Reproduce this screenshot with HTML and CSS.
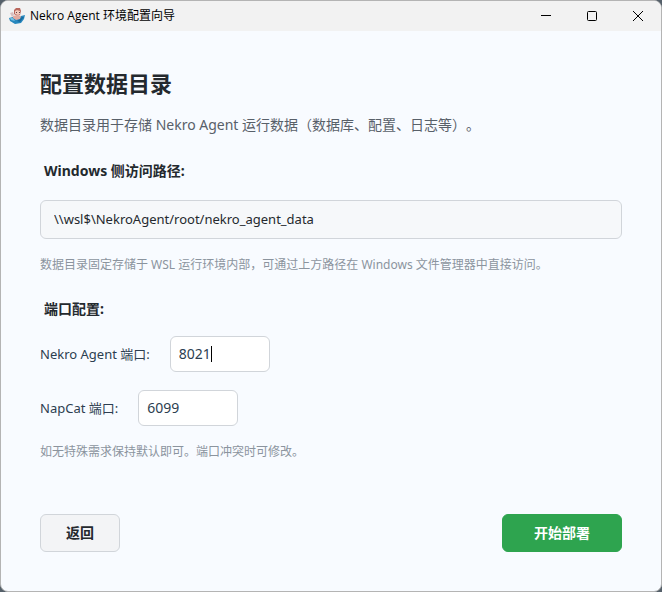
FILE: index.html
```html
<!DOCTYPE html>
<html lang="zh-CN">
<head>
    <meta charset="UTF-8">
    <meta name="viewport" content="width=device-width, initial-scale=1.0">
    <title>Nekro Agent 环境配置向导</title>
    <link rel="stylesheet" href="styles.css">
</head>
<body>

    <div class="window">
        <header class="titlebar">
            <svg class="app-icon" viewBox="0 0 16 16" aria-hidden="true">
                <path d="M0 10l4-1 3 2 5-3 4-1-1 4-3 4-6 1-5-3z" fill="#2787bd"/>
                <path d="M1 10l3 0 2 3-4-1z" fill="#77c1e2"/>
                <path d="M8 13l5-4 2 0-4 5z" fill="#176a9f"/>
                <path d="M5 2l2-2h4l1 3-1 4-3 1-3-2z" fill="#b9675c"/>
                <path d="M6 3l2-1 3 1v3L9 7 6 6z" fill="#f3cabb"/>
                <path d="M4 8l4-1 4 1-1 3-4 1-3-2z" fill="#e2aba0"/>
                <path d="M1 5l3-1 1 3-2 2z" fill="#d8bfc0"/>
                <path d="M7 4h1v1H7zM10 4h1v1h-1z" fill="#60404a"/>
            </svg>
            <span class="titlebar-text">Nekro Agent 环境配置向导</span>
            <button class="window-button" type="button" aria-label="最小化">
                <svg viewBox="0 0 12 12"><path d="M1 5.5h10"/></svg>
            </button>
            <button class="window-button" type="button" aria-label="最大化">
                <svg viewBox="0 0 12 12"><rect x="1.5" y="1.5" width="9" height="9" rx="1"/></svg>
            </button>
            <button class="window-button" type="button" aria-label="关闭">
                <svg viewBox="0 0 12 12"><path d="M1 1l10 10M11 1L1 11"/></svg>
            </button>
        </header>

        <form class="content">
            <h1>配置数据目录</h1>
            <p class="description">数据目录用于存储 Nekro Agent 运行数据（数据库、配置、日志等）。</p>

            <label class="section-label" for="dataPath">Windows 侧访问路径:</label>
            <input class="path-input" type="text" id="dataPath" value="\\wsl$\NekroAgent/root/nekro_agent_data" readonly>
            <p class="hint">数据目录固定存储于 WSL 运行环境内部，可通过上方路径在 Windows 文件管理器中直接访问。</p>

            <h2 class="section-label">端口配置:</h2>
            <div class="port-row">
                <label for="agentPort">Nekro Agent 端口:</label>
                <div class="port-field">
                    <input class="port-input" type="text" id="agentPort" value="8021">
                    <span class="caret"></span>
                </div>
            </div>
            <div class="port-row">
                <label for="napcatPort">NapCat 端口:</label>
                <input class="port-input" type="text" id="napcatPort" value="6099">
            </div>
            <p class="hint">如无特殊需求保持默认即可。端口冲突时可修改。</p>

            <div class="actions">
                <button class="button" type="button">返回</button>
                <button class="button button-primary" type="submit">开始部署</button>
            </div>
        </form>
    </div>

</body>
</html>
```
FILE: styles.css
```css
* {
    box-sizing: border-box;
}
body {
    margin: 0;
    background-color: #55606a;
    font-family: "Noto Sans", "Noto Sans CJK SC", sans-serif;
    font-size: 14px;
    line-height: 20px;
    color: #24292e;
    text-spacing-trim: space-all;
}
input, button {
    font: inherit;
    color: inherit;
}
h1, h2, p {
    margin: 0;
}
.window {
    display: flex;
    flex-direction: column;
    min-height: 100vh;
    border: 1px solid #b4b4b4;
    border-radius: 8px;
    background-color: #f8fbff;
    overflow: hidden;
}
.titlebar {
    display: flex;
    align-items: center;
    height: 30px;
    padding-left: 8px;
    background-color: #f2f2f2;
    font-family: "Open Sans", "Noto Sans CJK SC", sans-serif;
    font-size: 12px;
    color: #000;
}
.app-icon {
    width: 16px;
    height: 16px;
    margin-right: 5px;
}
.titlebar-text {
    flex: 1;
}
.window-button {
    display: flex;
    align-items: center;
    justify-content: center;
    width: 46px;
    height: 30px;
    padding: 0;
    border: none;
    background: none;
}
.window-button svg {
    width: 12px;
    height: 12px;
    fill: none;
    stroke: #000;
}
.content {
    display: flex;
    flex: 1;
    flex-direction: column;
    padding: 38px 39px 39px;
}
h1 {
    font-size: 22px;
    line-height: 28px;
}
.description {
    margin-top: 18px;
    color: #586069;
}
.section-label {
    padding-left: 4px;
    font-size: 14px;
    font-weight: bold;
    line-height: 20px;
}
.description + .section-label {
    margin-top: 26px;
}
.path-input {
    width: 100%;
    height: 39px;
    margin-top: 19px;
    padding: 0 13px 2px;
    border: 1px solid #d1d5da;
    border-radius: 6px;
    background-color: #f6f8fa;
    font-size: 13px;
}
.hint {
    margin-top: 16px;
    font-size: 12px;
    color: #8b949e;
}
.hint + .section-label {
    margin-top: 24px;
}
.port-row {
    display: flex;
    align-items: center;
    gap: 20px;
    margin-top: 18px;
    font-size: 13px;
    color: #2c3e50;
}
.section-label + .port-row {
    margin-top: 17px;
}
.port-field {
    position: relative;
}
.port-input {
    display: block;
    width: 100px;
    height: 36px;
    padding: 0 8px 2px;
    border: 1px solid #d1d5da;
    border-radius: 6px;
    background-color: #fff;
    font-size: 14px;
    outline: none;
}
.caret {
    position: absolute;
    top: 10px;
    left: 41px;
    width: 1px;
    height: 16px;
    background-color: #000;
}
.actions {
    display: flex;
    justify-content: space-between;
    margin-top: auto;
}
.button {
    min-width: 80px;
    height: 38px;
    padding: 0 24px;
    border: 1px solid #d1d5da;
    border-radius: 6px;
    background-color: #f3f4f6;
    font-weight: bold;
}
.button-primary {
    min-width: 120px;
    border-color: #2ea44f;
    background-color: #2ea44f;
    color: #fff;
}
```
